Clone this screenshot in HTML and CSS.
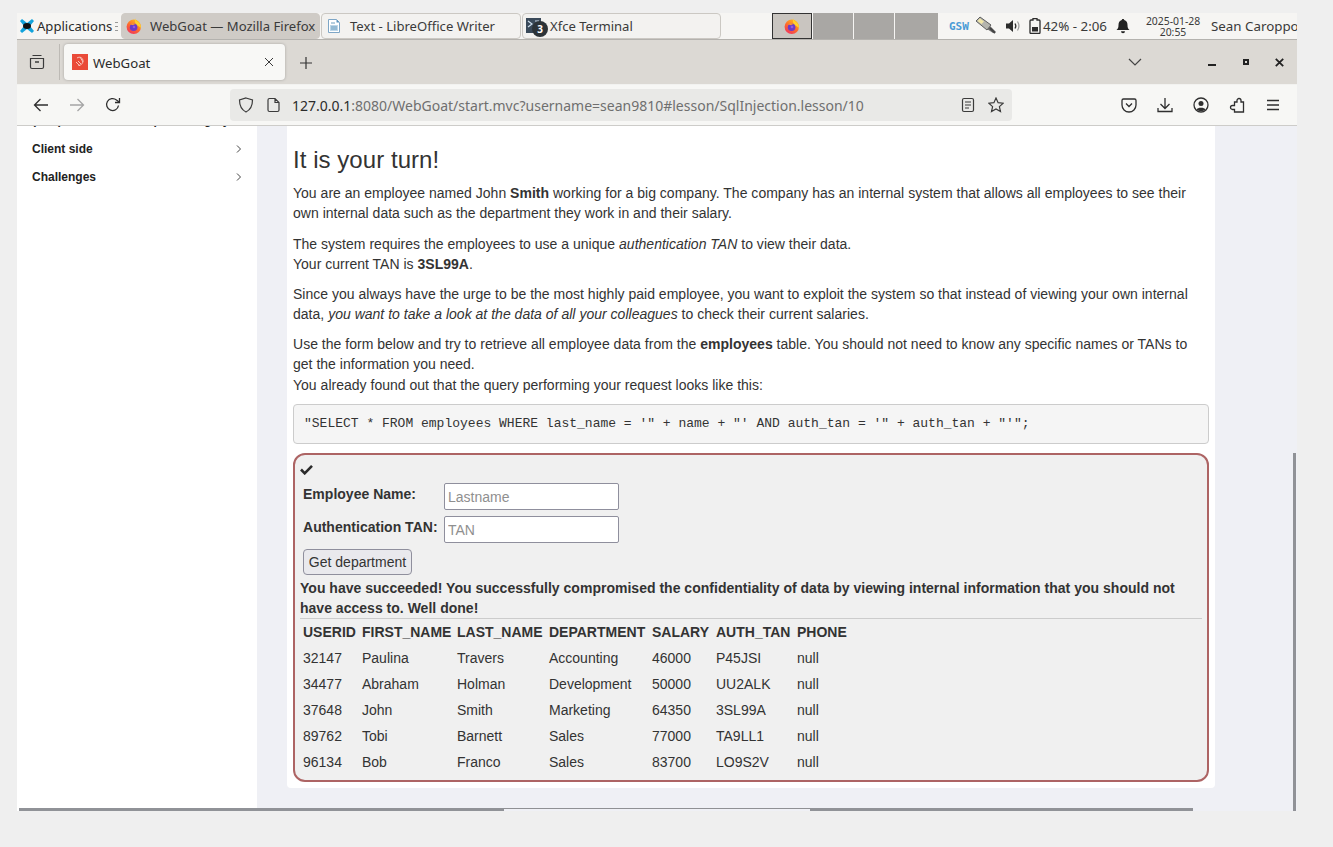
FILE: index.html
```html
<!DOCTYPE html>
<html lang="en">
<head>
<meta charset="utf-8">
<title>WebGoat</title>
<link rel="stylesheet" href="styles.css">
</head>
<body>
<svg class="defs" width="0" height="0" aria-hidden="true">
  <defs>
    <linearGradient id="fx" x1="0.8" y1="0" x2="0.2" y2="1">
      <stop offset="0" stop-color="#ffc21f"/><stop offset="0.5" stop-color="#ff6f2a"/><stop offset="1" stop-color="#f0305f"/>
    </linearGradient>
    <symbol id="firefox" viewBox="0 0 16 16">
      <circle cx="7.8" cy="8.800" r="7.200" fill="url(#fx)"/>
      <path d="M9.5 0.2C9.4 2.4 10.6 3 12 4c1.800 1.300 3.200 3.200 2.900 5.800L10 6.400C9 5 8.600 2.400 9.500 .2z" fill="#ffd22e"/>
      <circle cx="7.600" cy="9.200" r="3.800" fill="#6b3bc8"/>
      <path d="M4 6.600C5.500 5 8.400 4.700 9.800 6.200 8.400 6 7.600 6.400 7.200 7.200 6.200 7 5 6.800 4 6.600z" fill="#ff9a2a"/>
      <circle cx="8" cy="9" r="1.300" fill="#8f5be0"/>
    </symbol>
  </defs>
</svg>

<div class="screen">
  <header class="panel">
    <div class="apps">
      <svg class="xfce" width="16" height="16" viewBox="0 0 16 16"><path d="M1 3 3 1l5 4 5-4 2 2-4 5 4 5-2 2-5-4-5 4-2-2 4-5z" fill="#12a3dc"/><ellipse cx="8" cy="8" rx="4" ry="3" fill="#111"/></svg>
      <span>Applications</span>
      <span class="grip"></span>
    </div>
    <div class="task task-active">
      <svg class="ico16" width="16" height="16"><use href="#firefox"/></svg>
      <span>WebGoat — Mozilla Firefox</span>
    </div>
    <div class="task">
      <svg class="ico16" width="16" height="16" viewBox="0 0 16 16"><path d="M2.5 1.5h8l3 3v10h-11z" fill="#fff" stroke="#7ea6c6"/><path d="M4 7h8v6H4z" fill="#bcd6e8"/><path d="M10.5 1.5v3h3z" fill="#5b93bd"/><path d="M5 5h4M5 9h6M5 11h6" stroke="#6d9ebf"/></svg>
      <span>Text - LibreOffice Writer</span>
    </div>
    <div class="task task-term">
      <span class="term-ico"><span class="term-screen"><svg width="15" height="15" viewBox="0 0 15 15"><path d="M2 3l4 3-4 3M9 3h4" fill="none" stroke="#cfe0ee" stroke-width="1.200"/></svg></span><b class="badge">3</b></span>
      <span>Xfce Terminal</span>
    </div>
    <div class="pager">
      <div class="desk desk-active"><svg width="16" height="16"><use href="#firefox"/></svg></div>
      <div class="desk"></div>
      <div class="desk"></div>
      <div class="desk desk-wide"></div>
    </div>
    <div class="tray">
      <span class="gsw">GSW</span>
      <svg class="usb" width="22" height="20" viewBox="0 0 22 20"><path d="M12 13l6 4 3-1-6-6z" fill="#6e6e6e"/><path d="M1 5 5 1l11 8-4 5z" fill="#b5b5ae" stroke="#5f5f5f"/><path d="M2.500 5 5 2.500 9 5.500 6.500 8z" fill="#f2e7a8"/><path d="M15 12l5 5" stroke="#444" stroke-width="2"/></svg>
      <svg class="vol" width="16" height="16" viewBox="0 0 16 16"><path d="M1 5.5h3L8 2v12L4 10.500H1z" fill="#2c2c2c"/><path d="M10 5.500c1 1.500 1 3.500 0 5" fill="none" stroke="#2c2c2c" stroke-width="1.300"/><path d="M12.500 3.500c1.800 2.800 1.800 6.200 0 9" fill="none" stroke="#999" stroke-width="1.200"/></svg>
      <svg class="batt" width="12" height="16" viewBox="0 0 12 16"><path d="M4 .5h4V2h2a1 1 0 0 1 1 1v11.500a1 1 0 0 1-1 1H2a1 1 0 0 1-1-1V3a1 1 0 0 1 1-1h2z" fill="none" stroke="#2c2c2c" stroke-width="1.300"/><rect x="3" y="9" width="6" height="4.500" fill="#2c2c2c"/></svg>
      <span class="batt-text">42% - 2:06</span>
      <svg class="bell" width="14" height="16" viewBox="0 0 14 16"><path d="M7 1c.8 0 1.200.5 1.200 1.100C10.500 2.700 11.500 4.500 11.500 7c0 2.500.5 3.800 2 5H.5c1.500-1.200 2-2.500 2-5 0-2.500 1-4.300 3.300-4.900C5.800 1.500 6.200 1 7 1z" fill="#222"/><path d="M5 13.300h4a2 2 0 0 1-4 0z" fill="#222"/></svg>
      <span class="clock">2025-01-28<br>20:55</span>
      <span class="user">Sean Caroppo</span>
    </div>
  </header>

  <div class="tabbar">
    <div class="view-btn">
      <svg width="16" height="16" viewBox="0 0 16 16" fill="none" stroke="#3b3b3b" stroke-width="1.200"><path d="M3.500 1.500h9M1.500 4.500h13v8.500a1.500 1.500 0 0 1-1.500 1.500H3A1.500 1.500 0 0 1 1.500 13z"/><path d="M6 8h4" stroke-width="1.500"/></svg>
    </div>
    <div class="tab">
      <svg class="favicon" width="16" height="16" viewBox="0 0 16 16"><rect width="16" height="16" fill="#ea4a38"/><path d="M5 4c3-2 6 0 6 3s-3 5-5 4M4 8l4 4M8 3l3 5M6 7l3 3" fill="none" stroke="#f8c4bb" stroke-width="1"/></svg>
      <span class="tab-title">WebGoat</span>
      <svg class="tab-close" width="10" height="10" viewBox="0 0 10 10"><path d="M1 1l8 8M9 1L1 9" stroke="#3b3b3b" stroke-width="1"/></svg>
    </div>
    <svg class="newtab" width="12" height="12" viewBox="0 0 12 12"><path d="M6 0v12M0 6h12" stroke="#333" stroke-width="1.200"/></svg>
    <svg class="alltabs" width="14" height="8" viewBox="0 0 14 8"><path d="M1 1l6 6 6-6" fill="none" stroke="#444" stroke-width="1.200"/></svg>
    <div class="winctl">
      <span class="min"></span>
      <span class="max"></span>
      <svg width="9" height="9" viewBox="0 0 9 9"><path d="M.8.800l7.400 7.400M8.200.800L.8 8.200" stroke="#222" stroke-width="1.800"/></svg>
    </div>
  </div>

  <nav class="navbar">
    <svg class="nav-back" width="16" height="16" viewBox="0 0 16 16" fill="none" stroke="#2f2f2f" stroke-width="1.300"><path d="M15 8H1.500M7.500 2l-6 6 6 6"/></svg>
    <svg class="nav-fwd" width="16" height="16" viewBox="0 0 16 16" fill="none" stroke="#a5a5a5" stroke-width="1.300"><path d="M1 8h13.500M8.500 2l6 6-6 6"/></svg>
    <svg class="nav-reload" width="16" height="16" viewBox="0 0 16 16" fill="none" stroke="#2f2f2f" stroke-width="1.300"><path d="M13.500 8.500A6 6 0 1 1 11.500 3l2.500 2"/><path d="M14.500 1v4.500H10" /></svg>
    <div class="urlbar">
      <svg class="url-shield" width="16" height="16" viewBox="0 0 16 16" fill="none" stroke="#3b3b3b" stroke-width="1.200"><path d="M8 1l6.500 2c0 5.500-1.500 9.500-6.500 12C3 12.500 1.500 8.500 1.500 3z"/></svg>
      <svg class="url-page" width="14" height="16" viewBox="0 0 14 16" fill="none" stroke="#3b3b3b" stroke-width="1.200"><path d="M2.500 1.500H8L12 5.500V13a1.500 1.500 0 0 1-1.500 1.500h-8A1.500 1.500 0 0 1 1 13V3a1.500 1.500 0 0 1 1.500-1.500zM8 1.500v4h4"/></svg>
      <span class="url"><span class="url-host">127.0.0.1</span>:8080/WebGoat/start.mvc?username=sean9810#lesson/SqlInjection.lesson/10</span>
      <svg class="url-reader" width="14" height="16" viewBox="0 0 14 16" fill="none" stroke="#3b3b3b" stroke-width="1.200"><rect x="1.500" y="1.500" width="11" height="13" rx="1.500"/><path d="M4 5h6M4 8h6M4 11h4"/></svg>
      <svg class="url-star" width="16" height="16" viewBox="0 0 16 16" fill="none" stroke="#3b3b3b" stroke-width="1.200"><path d="M8 1l2.100 4.700 5.100.5-3.800 3.400 1.100 5L8 12l-4.500 2.600 1.100-5L.8 6.200l5.100-.5z"/></svg>
    </div>
    <div class="nav-right">
      <svg width="16" height="16" viewBox="0 0 16 16" fill="none" stroke="#2f2f2f" stroke-width="1.300"><path d="M2.500 2h11A1.500 1.500 0 0 1 15 3.500V8a7 7 0 0 1-14 0V3.500A1.500 1.500 0 0 1 2.500 2z"/><path d="M5 6.500l3 3 3-3"/></svg>
      <svg width="16" height="16" viewBox="0 0 16 16" fill="none" stroke="#2f2f2f" stroke-width="1.300"><path d="M8 1v10M3.500 7L8 11.500 12.500 7M1 11v3.500h14V11"/></svg>
      <svg width="16" height="16" viewBox="0 0 16 16"><circle cx="8" cy="8" r="7" fill="none" stroke="#2f2f2f" stroke-width="1.300"/><circle cx="8" cy="6.500" r="2.500" fill="#2f2f2f"/><path d="M3.500 12.500c1-2.500 8-2.500 9 0-2 2-7 2-9 0z" fill="#2f2f2f"/></svg>
      <svg width="16" height="16" viewBox="0 0 16 16" fill="none" stroke="#2f2f2f" stroke-width="1.300"><path d="M6 4.500h2.500V3a2 2 0 0 1 4 0v1.500H15V14.500H6V12H4a2 2 0 0 1 0-4h2z" transform="translate(-.5 .5)"/></svg>
      <svg width="16" height="16" viewBox="0 0 16 16" fill="none" stroke="#2f2f2f" stroke-width="1.300"><path d="M2 3.500h12M2 8h12M2 12.500h12"/></svg>
    </div>
  </nav>

  <div class="viewport">
    <aside class="sidebar">
      <ul class="menu">
        <li><span>(A10) Server-side Request Forgery</span></li>
        <li><span>Client side</span><svg width="6" height="8" viewBox="0 0 6 8"><path d="M1 .5 4.500 4 1 7.500" fill="none" stroke="#444"/></svg></li>
        <li><span>Challenges</span><svg width="6" height="8" viewBox="0 0 6 8"><path d="M1 .5 4.500 4 1 7.500" fill="none" stroke="#444"/></svg></li>
      </ul>
    </aside>
    <main class="main">
      <article class="card">
        <h2>It is your turn!</h2>
        <p>You are an employee named John <strong>Smith</strong> working for a big company. The company has an internal system that allows all employees to see their own internal data such as the department they work in and their salary.</p>
        <p>The system requires the employees to use a unique <em>authentication TAN</em> to view their data.<br>Your current TAN is <strong>3SL99A</strong>.</p>
        <p>Since you always have the urge to be the most highly paid employee, you want to exploit the system so that instead of viewing your own internal data, <em>you want to take a look at the data of all your colleagues</em> to check their current salaries.</p>
        <p class="lead-out">Use the form below and try to retrieve all employee data from the <strong>employees</strong> table. You should not need to know any specific names or TANs to get the information you need.<br>You already found out that the query performing your request looks like this:</p>
        <pre class="code">"SELECT * FROM employees WHERE last_name = '" + name + "' AND auth_tan = '" + auth_tan + "'";</pre>
        <section class="attack">
          <div class="check"><svg width="13" height="11" viewBox="0 0 13 11"><path d="M1 5.500 4.700 9.300 12 1.800" fill="none" stroke="#2b2b2b" stroke-width="2.600"/></svg></div>
          <form class="attack-form">
            <table class="form-table">
              <tr>
                <td class="label-cell"><label>Employee Name:</label></td>
                <td><input type="text" placeholder="Lastname"></td>
              </tr>
              <tr>
                <td class="label-cell"><label>Authentication TAN:</label></td>
                <td><input type="text" placeholder="TAN"></td>
              </tr>
              <tr>
                <td colspan="2"><button type="button">Get department</button></td>
              </tr>
            </table>
          </form>
          <p class="feedback">You have succeeded! You successfully compromised the confidentiality of data by viewing internal information that you should not have access to. Well done!</p>
          <hr class="rule">
          <table class="results">
            <colgroup><col class="c1"><col class="c2"><col class="c3"><col class="c4"><col class="c5"><col class="c6"><col class="c7"></colgroup>
            <tr><th>USERID</th><th>FIRST_NAME</th><th>LAST_NAME</th><th>DEPARTMENT</th><th>SALARY</th><th>AUTH_TAN</th><th>PHONE</th></tr>
            <tr><td>32147</td><td>Paulina</td><td>Travers</td><td>Accounting</td><td>46000</td><td>P45JSI</td><td>null</td></tr>
            <tr><td>34477</td><td>Abraham</td><td>Holman</td><td>Development</td><td>50000</td><td>UU2ALK</td><td>null</td></tr>
            <tr><td>37648</td><td>John</td><td>Smith</td><td>Marketing</td><td>64350</td><td>3SL99A</td><td>null</td></tr>
            <tr><td>89762</td><td>Tobi</td><td>Barnett</td><td>Sales</td><td>77000</td><td>TA9LL1</td><td>null</td></tr>
            <tr><td>96134</td><td>Bob</td><td>Franco</td><td>Sales</td><td>83700</td><td>LO9S2V</td><td>null</td></tr>
          </table>
        </section>
      </article>
    </main>
    <div class="vscroll"></div>
    <div class="hscroll"><span class="hs-left"></span><span class="hs-mid"></span><span class="hs-right"></span></div>
  </div>
</div>
</body>
</html>
```

FILE: styles.css
```css
* { box-sizing: border-box; }
html, body { margin: 0; height: 100%; }
body { background: #efefef; overflow: hidden; font-family: "Liberation Sans", Arial, sans-serif; }
.defs { position: absolute; }
.screen { width: 1280px; height: 798px; margin: 13px 0 0 17px; display: flex; flex-direction: column; }

/* Desktop panel */
.panel { height: 27px; flex: none; display: flex; background: #f6f5f3; border-bottom: 1px solid #b4b2ae; font: 13.1px "Noto Sans", sans-serif; color: #3a3a3a; white-space: nowrap; }
.apps { width: 104px; display: flex; align-items: center; padding-left: 2px; gap: 2px; color: #2a2a2a; flex: none; }
.xfce { flex: none; }
.grip { width: 3px; height: 9px; margin-left: 1px; border-top: 1px solid #999; border-bottom: 1px solid #999; position: relative; }
.grip::after { content: ""; position: absolute; left: 0; right: 0; top: 3px; height: 1px; background: #999; }
.task { width: 200px; flex: none; display: flex; align-items: center; gap: 8px; padding-left: 4px; margin-right: 1px; background: #f3f2f0; border: 1px solid #cbc8c3; border-radius: 4px; }
.task-active { background: #cfcbc6; border-color: #cfcbc6; width: 199px; margin-right: 1px; }
.task-term { width: 199px; padding-left: 3px; gap: 0; margin-right: 0; }
.ico16 { flex: none; }
.term-ico { width: 24px; height: 20px; position: relative; flex: none; }
.term-screen { position: absolute; left: 0; top: 2px; width: 15px; height: 15px; background: #3a4a5a; display: block; line-height: 0; }
.badge { position: absolute; left: 6px; top: 5px; width: 16px; height: 16px; border-radius: 50%; background: #2c3338; color: #fff; font: bold 10px/16px "Noto Sans", sans-serif; text-align: center; }
.pager { display: flex; margin-left: 51px; gap: 1px; flex: none; height: 26px; }
.pager .desk { width: 40px; background: #a9a7a4; }
.pager .desk-active { background: #c9c5c0; border: 1px solid #333; display: flex; align-items: center; justify-content: center; }
.pager .desk-wide { width: 43px; }
.tray { flex: 1; display: flex; align-items: center; min-width: 0; overflow: hidden; }
.gsw { margin-left: 11px; font: bold 11px "DejaVu Sans Mono", monospace; color: #4a9bd6; width: 22px; flex: none; }
.usb { margin-left: 4px; flex: none; }
.vol { margin-left: 8px; flex: none; }
.batt { margin-left: 8px; flex: none; }
.batt-text { margin-left: 2px; font-size: 13.33px; flex: none; }
.bell { margin-left: 9px; flex: none; }
.clock { width: 56px; margin-left: 15px; padding-top: 1px; font-size: 10.4px; line-height: 11px; text-align: center; flex: none; }
.user { margin-left: 10px; font-size: 13.33px; flex: none; }

/* Firefox tab strip */
.tabbar { height: 44px; flex: none; display: flex; align-items: center; background: #dcd9d4; }
.view-btn { width: 43px; height: 36px; flex: none; display: flex; align-items: center; justify-content: center; border-right: 1px solid #bdbab5; padding-right: 3px; }
.tab { width: 221px; height: 36px; margin-left: 4px; flex: none; display: flex; align-items: center; background: #f8f8f6; border-radius: 4px; box-shadow: 0 0 3px rgba(0,0,0,.25); padding: 0 11px 0 8px; font: 13.2px "Noto Sans", sans-serif; color: #2b2b2b; }
.favicon { flex: none; }
.tab-title { margin-left: 5px; padding-top: 1px; flex: 1; }
.tab-close { flex: none; }
.newtab { margin-left: 15px; margin-top: 1px; flex: none; }
.alltabs { margin-left: 816px; flex: none; }
.winctl { margin-left: 66px; display: flex; align-items: center; flex: none; }
.winctl .min { width: 8px; height: 2px; background: #222; margin-top: 6px; }
.winctl .max { width: 6px; height: 6px; border: 2px solid #222; margin-left: 27px; margin-right: 26px; }

/* Firefox nav bar */
.navbar { height: 42px; flex: none; display: flex; align-items: center; background: #f7f7f5; border-top: 1px solid #f2f2f0; border-bottom: 1px solid #cdccc9; }
.nav-back { margin-left: 16px; flex: none; }
.nav-fwd { margin-left: 20px; flex: none; }
.nav-reload { margin-left: 20px; flex: none; }
.urlbar { width: 782px; height: 32px; margin-left: 109px; flex: none; display: flex; align-items: center; background: #e9e9e7; border-radius: 4px; font: 14px "Noto Sans", sans-serif; color: #6f6f6f; white-space: nowrap; }
.url-shield { margin-left: 8px; flex: none; }
.url-page { margin-left: 13px; flex: none; }
.url { margin-left: 11px; flex: 1; }
.url-host { color: #2b2b2b; }
.url-reader { flex: none; margin-right: 13px; }
.url-star { flex: none; margin-right: 8px; }
.nav-right { display: flex; gap: 20px; margin-left: 109px; flex: none; }

/* Page viewport */
.viewport { flex: 1; min-height: 0; display: flex; position: relative; overflow: hidden; background: #eff0f5; }
.sidebar { width: 240px; flex: none; background: #fff; overflow: hidden; }
.menu { list-style: none; margin: -20px 0 0; padding: 0 15px; font-size: 12px; font-weight: bold; color: #222; }
.menu li { height: 28px; display: flex; align-items: center; justify-content: space-between; white-space: nowrap; }
.menu li:first-child { margin-bottom: 1px; }
.main { flex: 1; min-width: 0; padding-left: 30px; }
.card { width: 928px; height: 662px; background: #fff; border-radius: 0 0 4px 4px; padding: 21px 6px 7px; color: #333; font-size: 14px; line-height: 20.1px; letter-spacing: .015px; }
.card h2 { margin: 0 0 10.4px; font-size: 24px; line-height: 26px; font-weight: 400; letter-spacing: .05px; }
.card p { margin: 0 0 10.15px; }
.card .lead-out { margin-bottom: 9.25px; }
.code { margin: 0 0 9px; height: 40px; padding: 10px; font: 13px/18.57px "Liberation Mono", monospace; letter-spacing: 0; color: #333; background: #f5f5f5; border: 1px solid #ccc; border-radius: 4px; }
.attack { height: 329px; padding: 0 5px; background: #f0f0f0; border: 2px solid #ad6464; border-radius: 12px; }
.check { height: 25px; padding-top: 9px; line-height: 0; }
.form-table { border-collapse: collapse; }
.form-table td { padding: 3px; vertical-align: middle; font-weight: bold; line-height: 20px; }
.form-table .label-cell { width: 141px; white-space: nowrap; }
.form-table label { display: inline-block; margin-bottom: 5px; }
.form-table input { display: block; width: 175px; height: 27px; padding: 2px 3px 0; font: 14px "Liberation Sans", sans-serif; border: 1px solid #8f8f9d; border-radius: 2px; background: #fff; }
.form-table input::placeholder { color: #8f8f8f; opacity: 1; }
.form-table button { display: block; width: 109px; height: 26px; padding: 0; font: 14px "Liberation Sans", sans-serif; color: #333; background: #e9e9ed; border: 1px solid #8f8f9d; border-radius: 4px; }
.card .feedback { margin: 0; font-weight: bold; line-height: 20px; }
.rule { margin: 0; height: 1px; border: 0; background: #ccc; }
.results { border-collapse: collapse; table-layout: fixed; width: 595px; letter-spacing: 0; }
.results .c1 { width: 59px; }
.results .c2 { width: 95px; }
.results .c3 { width: 92px; }
.results .c4 { width: 103px; }
.results .c5 { width: 64px; }
.results .c6 { width: 81px; }
.results .c7 { width: 101px; }
.results th, .results td { height: 26px; padding: 0 3px; text-align: left; white-space: nowrap; line-height: 20px; }

/* Overlay scrollbars */
.vscroll { position: absolute; right: 1px; bottom: 0; width: 3px; height: 358px; background: #909297; }
.hscroll { position: absolute; left: 2px; bottom: 0; width: 1174px; height: 3px; display: flex; align-items: flex-start; }
.hs-left, .hs-right { height: 3px; background: #909297; }
.hs-left { width: 485px; }
.hs-mid { width: 306px; height: 1px; background: #8f9094; }
.hs-right { width: 383px; }
```
